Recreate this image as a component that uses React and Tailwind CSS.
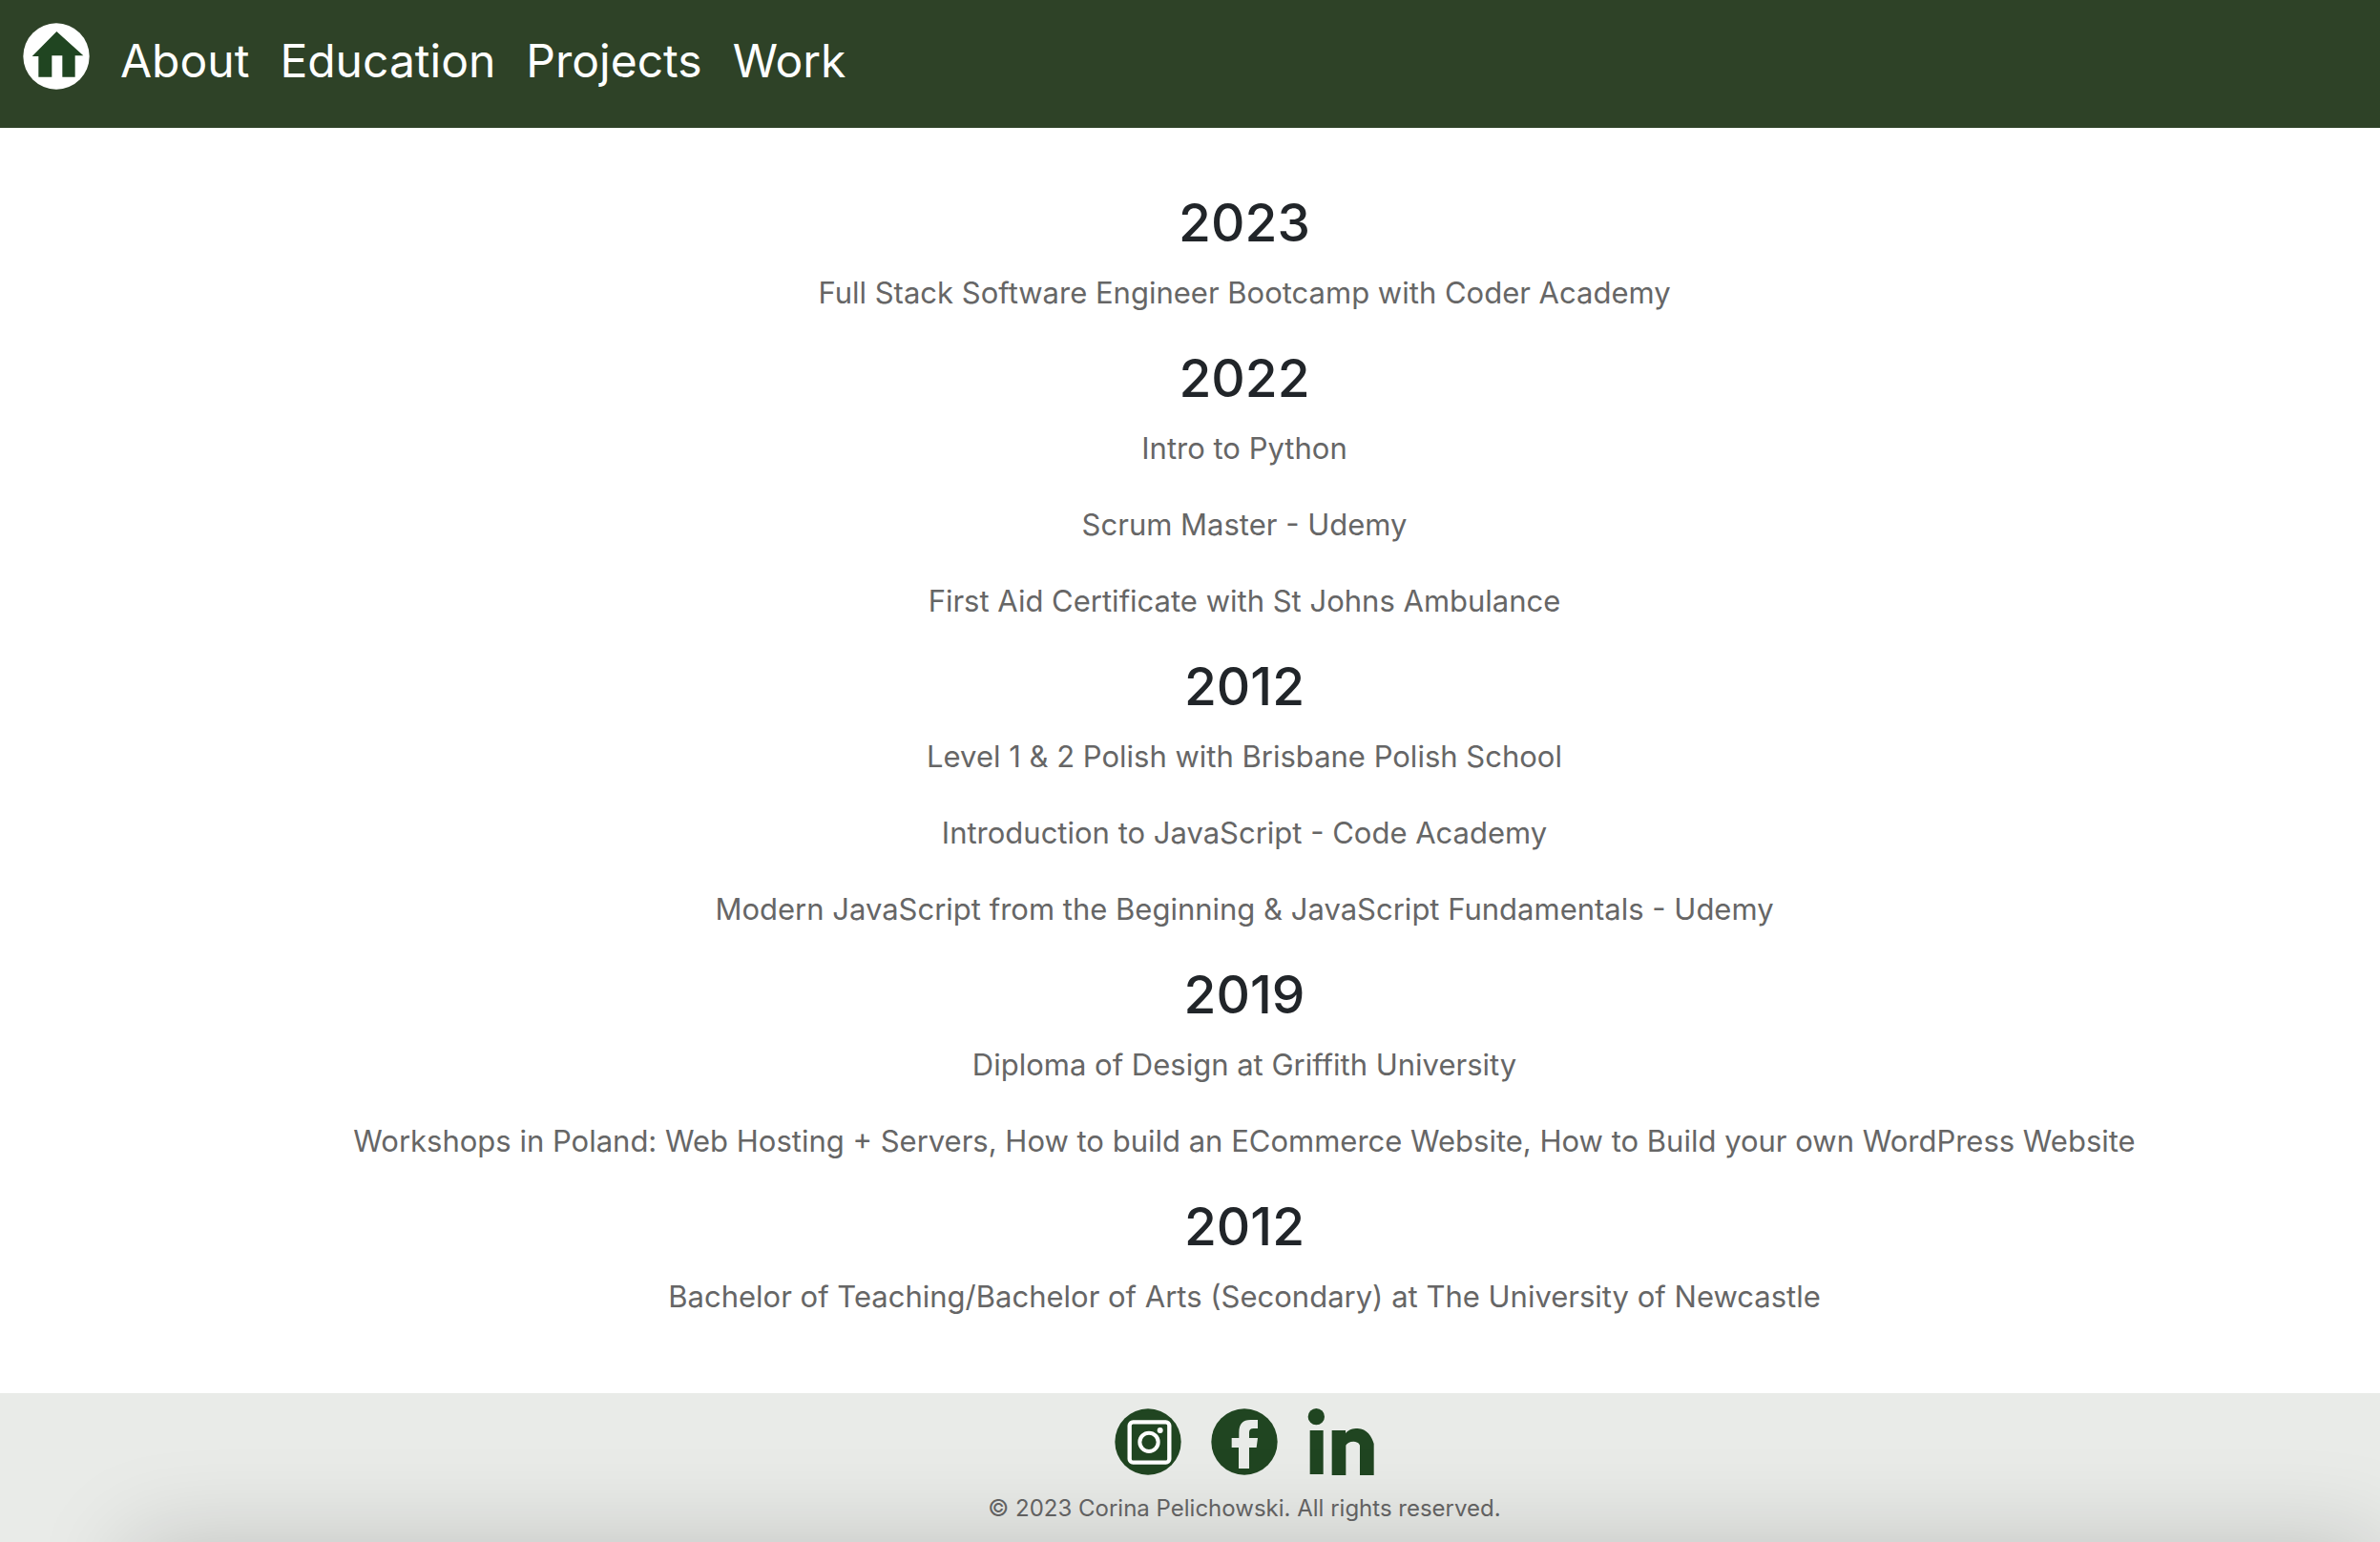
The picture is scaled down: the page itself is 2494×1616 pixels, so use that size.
const links = ["About", "Education", "Projects", "Work"];

const timeline = [
  { year: "2023", items: ["Full Stack Software Engineer Bootcamp with Coder Academy"] },
  {
    year: "2022",
    items: ["Intro to Python", "Scrum Master - Udemy", "First Aid Certificate with St Johns Ambulance"],
  },
  {
    year: "2012",
    items: [
      "Level 1 & 2 Polish with Brisbane Polish School",
      "Introduction to JavaScript - Code Academy",
      "Modern JavaScript from the Beginning & JavaScript Fundamentals - Udemy",
    ],
  },
  {
    year: "2019",
    items: [
      "Diploma of Design at Griffith University",
      "Workshops in Poland: Web Hosting + Servers, How to build an ECommerce Website, How to Build your own WordPress Website",
    ],
  },
  { year: "2012", items: ["Bachelor of Teaching/Bachelor of Arts (Secondary) at The University of Newcastle"] },
];

function HomeIcon() {
  return (
    <svg viewBox="0 0 210 210" className="size-[70px]" aria-hidden="true">
      <circle cx="105" cy="105" r="104" fill="#fff" />
      <path d="M106 27 L190 103 H164 V170 H124 V103 H91 V170 H49 V105 H29 Z" fill="#204521" />
    </svg>
  );
}

function InstagramIcon() {
  return (
    <svg viewBox="0 0 210 210" className="size-[70px]" aria-hidden="true">
      <circle cx="105" cy="105" r="104" fill="#204521" />
      <rect x="47" y="43" width="125" height="127" rx="11" fill="none" stroke="#fff" strokeWidth="13" />
      <circle cx="108" cy="106" r="29" fill="none" stroke="#fff" strokeWidth="12" />
      <circle cx="143" cy="69" r="9" fill="#fff" />
    </svg>
  );
}

function FacebookIcon() {
  return (
    <svg viewBox="0 0 210 210" className="size-[70px]" aria-hidden="true">
      <circle cx="105" cy="105" r="104" fill="#204521" />
      <path
        d="M87 189 V123 H65 V93 H88 V76 C88 48 100 36 124 36 H147 V63 H134 C124 63 120 67 120 76 V93 H147 L143 123 H120 V189 Z"
        fill="#e9ebe8"
      />
    </svg>
  );
}

function LinkedInIcon() {
  return (
    <svg viewBox="0 0 210 210" className="size-[70px]" aria-hidden="true" fill="#204521">
      <circle cx="28" cy="26" r="26" />
      <rect x="8" y="69" width="42" height="138" />
      <path d="M77 69 H120 V78 C129 67 143 63 158 63 C187 63 203 89 209 111 V210 H165 V116 C162 107 153 104 145 104 C133 104 124 109 121 116 V210 H77 Z" />
    </svg>
  );
}

const social = [
  { name: "Instagram", Icon: InstagramIcon },
  { name: "Facebook", Icon: FacebookIcon },
  { name: "LinkedIn", Icon: LinkedInIcon },
];

export default function App() {
  return (
    <div className="flex min-h-screen flex-col bg-white font-['Inter',sans-serif]">
      <header className="bg-[#2e4227] px-6 pt-6 pb-10">
        <nav className="flex items-end gap-8 text-white">
          <a href="#home" aria-label="Home">
            <HomeIcon />
          </a>
          {links.map((label) => (
            <a key={label} href={`#${label.toLowerCase()}`} className="text-[48px] leading-[60px]">
              {label}
            </a>
          ))}
        </nav>
      </header>

      <main className="pt-[66px] pb-[45px] pl-[114px] text-center">
        {timeline.map(({ year, items }, i) => (
          <section key={i}>
            <h2 className="mb-4 text-[55px] leading-[67px] font-medium text-[#212529]">{year}</h2>
            {items.map((item) => (
              <p key={item} className="mb-8 text-[31px] leading-[48px] text-[#666]">
                {item}
              </p>
            ))}
          </section>
        ))}
      </main>

      <footer className="relative flex-1 overflow-hidden bg-[#e9ebe8] pt-4 pl-[114px] text-center">
        <div className="flex justify-center gap-[31px]">
          {social.map(({ name, Icon }) => (
            <a key={name} href={`#${name.toLowerCase()}`} aria-label={name}>
              <Icon />
            </a>
          ))}
        </div>
        <p className="mt-4 text-[24px] leading-[38px] text-[#666]">© 2023 Corina Pelichowski. All rights reserved.</p>
        <div className="pointer-events-none absolute top-full right-0 left-[136px] h-64 shadow-[0_0_100px_rgba(0,0,0,0.18)]" />
      </footer>
    </div>
  );
}
